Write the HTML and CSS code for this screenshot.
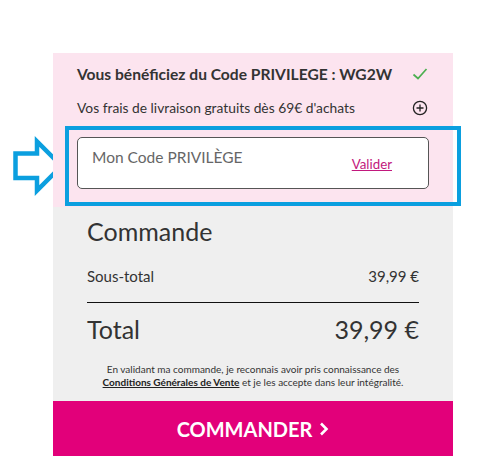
FILE: index.html
```html
<!DOCTYPE html>
<html lang="fr">
<head>
    <meta charset="UTF-8">
    <meta name="viewport" content="width=device-width, initial-scale=1.0">
    <title>Panier</title>
    <link rel="stylesheet" href="styles.css">
</head>
<body>
    <div class="page">
        <!-- Flèche d'annotation -->
        <svg class="pointer" width="60" height="64" viewBox="8 136 60 64">
            <path d="M15.5 153.5 H37 V141.5 L61.5 166 L37 190.5 V178 H15.5 Z" fill="none" stroke="#0b9fdf" stroke-width="4.5" stroke-linejoin="miter"/>
        </svg>

        <div class="cart">
            <div class="promo">
                <div class="promo-row promo-title">
                    <span>Vous bénéficiez du Code PRIVILEGE : WG2W</span>
                    <svg class="icon" width="16" height="14" viewBox="0 0 16 14">
                        <path d="M1.5 7.5 L6 11.5 L14.5 2" fill="none" stroke="#4caf50" stroke-width="1.7"/>
                    </svg>
                </div>
                <div class="promo-row promo-ship">
                    <span>Vos frais de livraison gratuits dès 69€ d'achats</span>
                    <svg class="icon" width="16" height="16" viewBox="0 0 16 16">
                        <circle cx="8" cy="8" r="6.6" fill="none" stroke="#222" stroke-width="1.3"/>
                        <path d="M8 4.5 V11.5 M4.5 8 H11.5" stroke="#222" stroke-width="1.3"/>
                    </svg>
                </div>
                <div class="code-field">
                    <span class="placeholder">Mon Code PRIVILÈGE</span>
                    <a href="#" class="validate">Valider</a>
                </div>
            </div>

            <div class="summary">
                <h2>Commande</h2>
                <div class="line sub">
                    <span>Sous-total</span>
                    <span>39,99 €</span>
                </div>
                <div class="line total">
                    <span>Total</span>
                    <span>39,99 €</span>
                </div>
                <p class="legal">En validant ma commande, je reconnais avoir pris connaissance des<br><a href="#">Conditions Générales de Vente</a> et je les accepte dans leur intégralité.</p>
            </div>

            <button type="button" class="order">
                COMMANDER
                <svg class="chev" width="10" height="14" viewBox="0 0 10 14">
                    <path d="M2 1.5 L7.5 7 L2 12.5" fill="none" stroke="#fff" stroke-width="2.6"/>
                </svg>
            </button>

            <!-- Cadre d'annotation -->
            <div class="highlight"></div>
        </div>
    </div>
</body>
</html>
```

FILE: styles.css
```css
body {
    margin: 0;
    padding: 0;
    background: #fff;
    font-family: Lato, "Open Sans", sans-serif;
    color: #333;
}
.page {
    position: relative;
    padding: 53px 0 0 53px;
}
.pointer {
    position: absolute;
    left: 8px;
    top: 136px;
}
.cart {
    position: relative;
    width: 400px;
}
.promo {
    background: #fce4ef;
    padding: 11px 24px 18px 24px;
}
.promo-row {
    display: flex;
    justify-content: space-between;
    align-items: center;
}
.promo-title {
    font-size: 15.6px;
    font-weight: bold;
    line-height: 20px;
    color: #333;
}
.promo-title .icon {
    margin-right: 1px;
}
.promo-ship {
    margin-top: 15px;
    font-size: 13.8px;
    line-height: 18px;
    color: #333;
}
.promo-ship .icon {
    margin-right: 1px;
}
.code-field {
    margin-top: 20px;
    height: 50px;
    border: 1px solid #555;
    border-radius: 5px;
    background: #fff;
    display: flex;
    justify-content: space-between;
    align-items: flex-start;
    padding: 0 36px 0 14px;
}
.placeholder {
    margin-top: 9px;
    font-size: 15.5px;
    line-height: 20px;
    color: #666;
}
.validate {
    margin-top: 17px;
    font-size: 13.3px;
    line-height: 18px;
    color: #c2187d;
    text-decoration: underline;
}
.summary {
    background: #efefef;
    padding: 9px 34px 13px 34px;
}
.summary h2 {
    margin: 0;
    font-size: 25px;
    font-weight: normal;
    line-height: 30px;
    color: #333;
}
.line {
    display: flex;
    justify-content: space-between;
}
.sub {
    margin-top: 20px;
    padding-bottom: 16px;
    border-bottom: 1px solid #111;
    font-size: 15px;
    line-height: 20px;
}
.total {
    margin-top: 11px;
    font-size: 25px;
    line-height: 30px;
}
.legal {
    margin: 19px 0 0 0;
    text-align: center;
    font-size: 10px;
    line-height: 12.5px;
    color: #333;
}
.legal a {
    color: #222;
    font-weight: bold;
    text-decoration: underline;
}
.order {
    display: flex;
    justify-content: center;
    align-items: center;
    width: 100%;
    height: 55px;
    border: none;
    background: #e2007a;
    color: #fff;
    font-family: Lato, "Open Sans", sans-serif;
    font-size: 20px;
    font-weight: bold;
    padding: 0;
    margin: 0;
}
.chev {
    margin-left: 7px;
}
.highlight {
    position: absolute;
    left: 12px;
    top: 73px;
    width: 388px;
    height: 72px;
    border: 4px solid #0b9fdf;
}
```
